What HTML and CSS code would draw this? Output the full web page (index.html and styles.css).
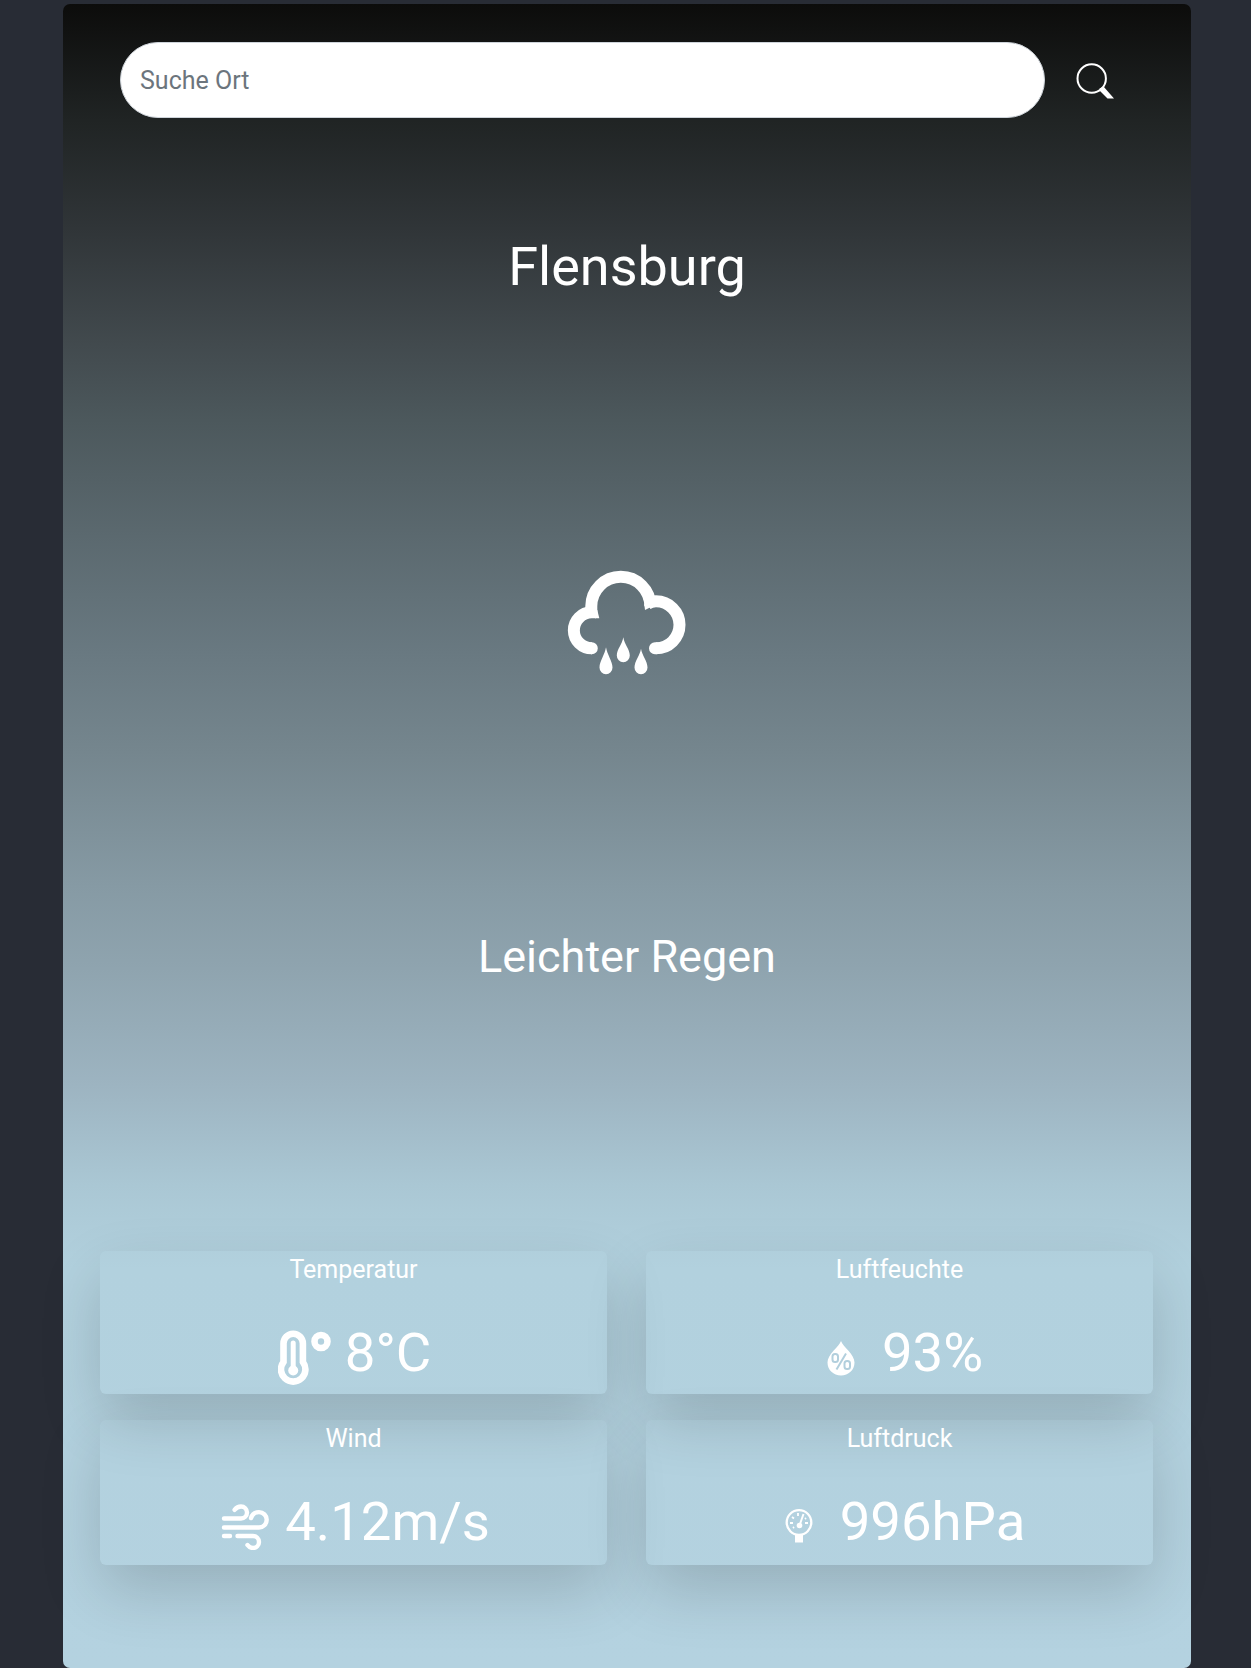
FILE: index.html
```html
<!DOCTYPE html>
<html lang="de">
<head>
<meta charset="utf-8">
<title>Wetter</title>
<link rel="stylesheet" href="styles.css">
</head>
<body>
<main class="weather">
  <form class="search">
    <input class="search-input" type="text" placeholder="Suche Ort">
    <button class="search-button" type="button" aria-label="Suchen">
      <svg width="40" height="38" viewBox="0 0 40 38" fill="none" stroke="#fff">
        <circle cx="15.700" cy="16.500" r="14.200" stroke-width="2"/>
        <path d="M23.500 26.500l4-2L38 36.500H31.500L24 29z" fill="#fff" stroke="none"/>
      </svg>
    </button>
  </form>
  <h1 class="city">Flensburg</h1>
  <div class="sky">
    <svg width="120" height="110" viewBox="0 0 120 110" fill="none" stroke="#fff" stroke-width="12">
      <path d="M24.300 48V40.300a29.500 29.500 0 0 1 59 0"/>
      <path d="M25 82.300A17.800 17.800 0 0 1 24.700 46.300H29"/>
      <path d="M80 38.200Q84 35.300 89 35.300A23.500 23.500 0 0 1 89 82.300"/>
      <path d="M24.600 82.300h.2M88 82.300h1" stroke-linecap="round"/>
      <g fill="#fff" stroke="none">
        <path d="M28 44h2.300l2 8.300H28z"/>
        <path d="M77.300 38L78 44L86 40z"/>
        <path d="M39 81.300c1 7 6.500 14 6.500 20.200a6.500 6.800 0 0 1-13 0c0-6.200 5.500-13.200 6.500-20.200z"/>
        <path d="M56.300 71.300c1 7 6.500 12 6.500 18.200a6.500 6.800 0 0 1-13 0c0-6.200 5.500-11.200 6.500-18.200z"/>
        <path d="M74 82.800c1 6.500 6.500 12.500 6.500 18.700a6.500 6.800 0 0 1-13 0c0-6.200 5.500-12.200 6.500-18.700z"/>
      </g>
    </svg>
  </div>
  <h2 class="condition">Leichter Regen</h2>
  <section class="metrics">
    <article class="metric">
      <h3 class="metric-label">Temperatur</h3>
      <p class="metric-value">
        <svg class="icon-temp" width="54" height="56" viewBox="0 0 54 56" fill="none" stroke="#fff">
          <path d="M5.500 13.500a9.700 9.700 0 0 1 19.400 0V32a12.200 12.200 0 1 1-19.400 0z" stroke-width="6.600"/>
          <path d="M15.200 13v26" stroke-width="5" stroke-linecap="round"/>
          <circle cx="15.200" cy="40.500" r="5" fill="#fff" stroke="none"/>
          <circle cx="43" cy="11.500" r="6.500" stroke-width="6.600"/>
        </svg>
        <span>8°C</span>
      </p>
    </article>
    <article class="metric">
      <h3 class="metric-label">Luftfeuchte</h3>
      <p class="metric-value">
        <svg class="icon-humidity" width="28" height="35" viewBox="0 0 28 35">
          <path d="M14 0c2 6 13.500 13 13.500 21.500C27.500 29 21.500 34.500 14 34.500S.5 29 .5 21.500C.5 13 12 6 14 0z" fill="#fff"/>
          <g fill="none" stroke="#b2cfdd" stroke-width="2">
            <rect x="5.500" y="13" width="5.500" height="8" rx="2.500"/>
            <rect x="17.500" y="20" width="5.500" height="8" rx="2.500"/>
            <path d="M19 12.500 9.500 28.500"/>
          </g>
        </svg>
        <span>93%</span>
      </p>
    </article>
    <article class="metric">
      <h3 class="metric-label">Wind</h3>
      <p class="metric-value">
        <svg class="icon-wind" width="48" height="46" viewBox="0 0 48 46" fill="none" stroke="#fff" stroke-width="4.400" stroke-linecap="round">
          <path d="M3 14.500h17a6 6 0 0 0 0-12c-3 0-5 1.500-6.500 3.300"/>
          <path d="M3 23.500h35a7.700 7.700 0 0 0 0-15.400c-4 0-7 2.500-8 6"/>
          <path d="M3 32h6M16.500 32H32a6 6 0 0 1 0 12c-2.500 0-4-1-5.500-3"/>
        </svg>
        <span>4.12m/s</span>
      </p>
    </article>
    <article class="metric">
      <h3 class="metric-label">Luftdruck</h3>
      <p class="metric-value">
        <svg class="icon-pressure" width="28" height="34" viewBox="0 0 28 34" fill="none" stroke="#fff">
          <circle cx="14" cy="13.500" r="12.300" stroke-width="2.300"/>
          <path d="M10 25h8v8.500h-8z" fill="#fff" stroke="none"/>
          <path d="M18.500 5 15 15" stroke-width="2"/>
          <circle cx="14.500" cy="16.500" r="2.800" fill="#fff" stroke="none"/>
          <path d="M5 14h3M20 14h3M7 8l2 1.500M13 4v3M21 9l-1 1M8 19l1-1" stroke-width="1.800"/>
        </svg>
        <span>996hPa</span>
      </p>
    </article>
  </section>
</main>
</body>
</html>
```
FILE: styles.css
```css
* {
  box-sizing: border-box;
}

body {
  margin: 0;
  height: 1668px;
  padding: 4px 60px 0 63px;
  overflow: hidden;
  background: #282c35;
  color: #fff;
  font-family: Roboto, "Liberation Sans", sans-serif;
}

.weather {
  display: flex;
  flex-direction: column;
  height: 1664px;
  border-radius: 7px;
  background: linear-gradient(#0c0c0b 0%, #202424 7%, #303538 13.5%, #424a4e 20.5%, #4c585c 25%, #5b696f 32%, #697981 39%, #75868e 45%, #869aa4 53%, #8fa4af 58%, #9db4c1 65%, #aac7d4 71%, #b2d1de 76%, #b4d2e0 100%);
}

h1, h2, h3, p {
  margin: 0;
  font-weight: 400;
}

.search {
  display: flex;
  align-items: center;
  gap: 31px;
  height: 76px;
  margin: 38px 0 0 57px;
}

.search-input {
  width: 925px;
  height: 76px;
  padding: 1px 19px 0;
  border: 1px solid #ced4da;
  border-radius: 38px;
  background: #fff;
  font: 25px/36px Roboto, "Liberation Sans", sans-serif;
}

.search-input::placeholder {
  color: #6c757d;
  opacity: 1;
}

.search-button {
  display: flex;
  margin-top: 2px;
  padding: 0;
  border: 0;
  background: none;
}

.city {
  height: 68px;
  margin-top: 115px;
  font-size: 54px;
  line-height: 68px;
  text-align: center;
}

.sky {
  display: flex;
  justify-content: center;
  height: 110px;
  margin-top: 265px;
}

.condition {
  height: 56px;
  margin-top: 253px;
  font-size: 45px;
  line-height: 56px;
  text-align: center;
}

.metrics {
  display: grid;
  grid-template-columns: 507px 507px;
  grid-template-rows: 143px 145px;
  gap: 26px 39px;
  margin: 266px 0 0 37px;
}

.metric {
  border-radius: 6px;
  box-shadow: 0 25px 62px rgba(0, 0, 0, 0.165);
  text-align: center;
}

.metric-label {
  padding-top: 3px;
  font-size: 25px;
  line-height: 32px;
}

.metric-value {
  display: flex;
  justify-content: center;
  margin-top: 33px;
  font-size: 54.5px;
  line-height: 66px;
}

.icon-temp {
  margin: 11px 13px 0 2px;
}

.icon-humidity {
  margin: 22px 27px 0 11px;
}

.icon-wind {
  margin: 16px 16px 0 4px;
}

.icon-pressure {
  margin: 21px 27px 0 11px;
}
```
